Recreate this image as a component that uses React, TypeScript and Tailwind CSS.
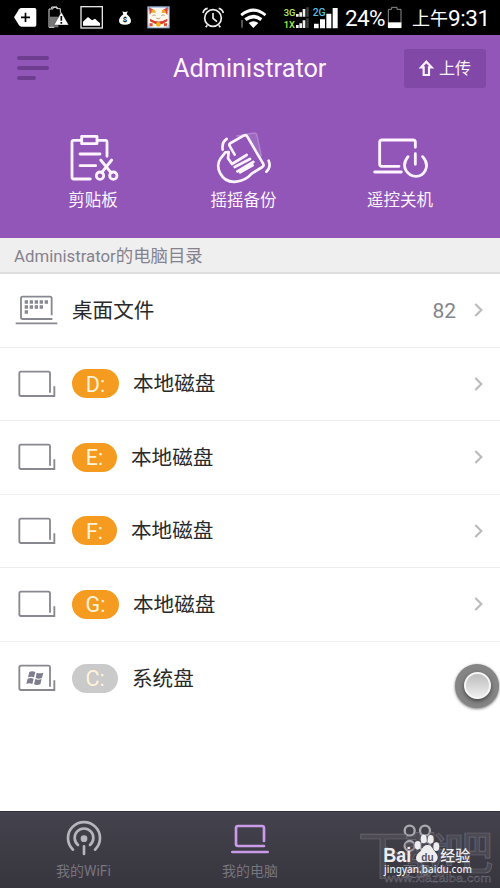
import React from "react";

const FONT = "font-[Roboto,'Noto_Sans_CJK_SC',sans-serif]";

function NotificationIcons() {
  return (
    <svg className="h-[35px] w-[180px] shrink-0" viewBox="0 0 540 105" fill="none">
      <path d="M42 52 57 28q3-4 8-4h39q5 0 5 5v46q0 5-5 5H65q-5 0-8-4z" fill="#fff" />
      <path d="M63 52h27M76.500 38v28" stroke="#000" strokeWidth="5" />
      <path d="M155 26v-5h16v5h10v14M147 82V27h12v-5h12v5" stroke="#ddd" strokeWidth="3" />
      <path d="M149 50h26v32h-26z" fill="#777" />
      <path d="M147 82h16" stroke="#ddd" strokeWidth="3" />
      <path d="M184 36 206 75h-44z" fill="#fff" stroke="#000" strokeWidth="1" />
      <path d="M184 48v14M184 66v5" stroke="#000" strokeWidth="5" />
      <rect x="243" y="20" width="64" height="64" stroke="#e4e4e4" strokeWidth="4" />
      <path d="M249 77V65l15-14 12 10 9-5 15 14v7z" fill="#fff" />
      <path d="M367 34q8 4 16 0l-3 9q12 9 13 19 0 12-18 12t-18-12q1-11 13-19z" fill="#fff" />
      <text x="375" y="67" textAnchor="middle" fill="#000" fontSize="23" fontWeight="700" fontFamily="Roboto,sans-serif">$</text>
      <rect x="442" y="19" width="67" height="66" fill="#9db9db" />
      <path d="M445 35q0-12 10-12h40q11 0 11 12v35q0 12-11 12h-39q-11 0-11-12z" fill="#fff8ed" />
      <path d="m447 22 15 8q-8 6-13 14zM504 21l-16 9q8 6 14 15z" fill="#e24737" />
      <path d="M455 30h9l4 8h-13zM486 30h9l3 9h-13z" fill="#edae32" />
      <path d="M457 47q5-5 10 0M484 47q5-5 10 0M469 54q6 5 12 0" stroke="#a66c55" strokeWidth="2" />
      <path d="M450 56q26 17 52 0v8q-25 18-52 0z" fill="#dc3d2c" />
      <circle cx="475" cy="73" r="7" fill="#edb523" />
      <path d="M448 70h10v9h-9zM492 70h10l-2 9h-8z" fill="#e7482c" />
    </svg>
  );
}

function RadioIcons() {
  return (
    <svg className="h-[35px] w-[143px] shrink-0" viewBox="600 0 429 105" fill="none">
      <circle cx="639" cy="54" r="25" stroke="#eee" strokeWidth="5" />
      <path d="M639 39v16l12 10M622 76l-5 6M656 76l5 6M609 39q2-12 14-14M656 25q12 3 14 14" stroke="#eee" strokeWidth="5" />
      <path d="M721 42Q760 9 799 42l-5 7q-34-27-68 0zM733 55q27-22 54 0l-6 8q-21-15-42 0zM746 69q14-11 29 0l-15 15z" fill="#fff" />
      <path d="M726 60v23" stroke="#aaa" strokeWidth="3" />
      <text x="851" y="49" textLength="35" lengthAdjust="spacingAndGlyphs" fill="#b1ed61" fontSize="29" fontWeight="500" fontFamily="Roboto,sans-serif">3G</text>
      <text x="851" y="83" textLength="34" lengthAdjust="spacingAndGlyphs" fill="#a6ec4a" fontSize="29" fontWeight="500" fontFamily="Roboto,sans-serif">1X</text>
      <path d="M888 42h8v8h-8zM898 37h8v13h-8zM908 27h8v23h-8zM888 75h8v9h-8zM898 70h8v14h-8zM908 61h8v23h-8z" fill="#eee" />
      <path d="M919 22h7v28h-7zM919 55h7v29h-7z" fill="#444" />
      <text x="938" y="49" textLength="39" lengthAdjust="spacingAndGlyphs" fill="#58bfe2" fontSize="35" fontWeight="500" fontFamily="Roboto,sans-serif">2G</text>
      <path d="M942 71h14v14h-14zM960 58h15v27h-15zM979 41h15v44h-15zM998 24h15v61h-15z" fill="#fff" />
    </svg>
  );
}

function StatusBar() {
  return (
    <div className="flex h-[35px] items-center overflow-hidden bg-black text-white">
      <NotificationIcons />
      <div className="w-5" />
      <RadioIcons />
      <span className="ml-[2px] w-[42px] whitespace-nowrap pt-px text-[22.500px] leading-[35px] tracking-[-0.7px]">24%</span>
      <svg className="h-[35px] w-[16px] shrink-0" viewBox="0 0 48 105" fill="none">
        <path d="M4 83V28h10v-6h16v6h12v55z" stroke="#aaa" strokeWidth="2.500" />
        <path d="M3 67h40v17H3z" fill="#fff" />
      </svg>
      <span className="ml-[9px] flex items-center whitespace-nowrap pt-px leading-[35px]">
        <span className="text-[18px]">上午</span>
        <span className="text-[22.500px] tracking-[-0.4px]">9:31</span>
      </span>
    </div>
  );
}

function ClipboardIcon() {
  return (
    <svg className="h-[50px] w-[54px]" viewBox="82 36 162 150" fill="none" stroke="#fff4ff" strokeWidth="8.500" strokeLinecap="round" strokeLinejoin="round">
      <path d="M124 58h-22q-5 0-5 5v106q0 5 5 5h50M174 58h23q5 0 5 5v43" />
      <path d="M126 46h46v22h-46zM121 99h60M121 134h47M183 117l31 38M216 117l-30 38" />
      <circle cx="181" cy="164" r="11" /><circle cx="221" cy="164" r="11" />
    </svg>
  );
}

function ShakeIcon() {
  return (
    <svg className="h-[54px] w-[57px]" viewBox="526 30 171 162" fill="none" stroke="#fff4ff" strokeWidth="8" strokeLinecap="round" strokeLinejoin="round">
      <path d="m588 45 51-9q8-1 10 7l13 61-8 5-35-63z" fill="#fff" fillOpacity=".12" stroke="#d5afe4" strokeOpacity=".45" strokeWidth="4" />
      <path d="m582 101-15-26q-3-6 3-9l39-22q7-4 11 3l47 80q4 7-2 11l-31 19q-20 22-47 25-33 4-49-26-12-25 2-44l14-18 10-1-2 19 12 17 44-27" />
      <path d="m582 138 46-24M590 151l48-28M598 154l38-21M546 86q-3-23 12-32M684 119q8 20-7 33" />
    </svg>
  );
}

function PowerIcon() {
  return (
    <svg className="h-[42px] w-[58px]" viewBox="366 49 174 126" fill="none" stroke="#fff4ff" strokeWidth="8.500" strokeLinecap="round" strokeLinejoin="round">
      <path d="M374 154h80M447 137h-51q-7 0-7-7V65q0-7 7-7h93q7 0 7 7v15M496 99v32M474 108q-18 23-5 43 11 16 29 16 19 0 28-18 10-21-8-41" />
    </svg>
  );
}

const actions = [
  { label: "剪贴板", Icon: ClipboardIcon, box: "w-[186px]", shift: "pl-px" },
  { label: "摇摇备份", Icon: ShakeIcon, box: "w-[115px]", shift: "pl-px" },
  { label: "遥控关机", Icon: PowerIcon, box: "w-[198px]", shift: "pl-px" },
];

function Header() {
  return (
    <header className="flex h-[203px] flex-col bg-[#9156b8] text-[#fff4ff]">
      <div className="flex h-[66px] items-center pl-[17px] pr-[14px]">
        <div className="flex w-8 flex-col gap-[6px]">
          <i className="h-1 w-8 rounded-full bg-[#6e3d90]" />
          <i className="h-1 w-8 rounded-full bg-[#6e3d90]" />
          <i className="h-1 w-[19px] rounded-full bg-[#6e3d90]" />
        </div>
        <h1 className="ml-[124px] w-[231px] whitespace-nowrap pt-px text-[25.300px]">Administrator</h1>
        <button className="flex h-[39px] w-[82px] items-center rounded-[3px] bg-[#8148a8] pl-[15px]">
          <svg className="h-[17px] w-[15px]" viewBox="508 179 45 51" fill="none" stroke="#fff4ff" strokeWidth="6.500">
            <path d="m530 184 16 17h-8v23h-16v-23h-8z" />
          </svg>
          <span className="ml-[5px] pt-[2px] text-[16px]">上传</span>
        </button>
      </div>
      <nav className="flex pt-[29px]">
        {actions.map(({ label, Icon, box, shift }) => (
          <div key={label} className={`flex flex-col items-center ${box}`}>
            <div className={`flex h-[56px] items-center ${shift}`}><Icon /></div>
            <span className="mt-[3px] text-[16.500px] leading-6">{label}</span>
          </div>
        ))}
      </nav>
    </header>
  );
}

function DesktopIcon() {
  return (
    <svg className="h-[31px] w-[43px] shrink-0" viewBox="44 181 129 93" fill="none" stroke="#888891" strokeWidth="5.500">
      <path d="M46 266h125M154 242v-51q0-5-5-5H67q-5 0-5 5v57q0 5 5 5h89" />
      <path d="M73 202h72M73 217h60M73 232h12" strokeWidth="10" strokeDasharray="10 5" />
    </svg>
  );
}

function DiskIcon({ system }: { system?: boolean }) {
  return (
    <svg className="h-[28px] w-[38px] shrink-0" viewBox="55 71 114 84" fill="none" stroke="#888891" strokeWidth="5.500">
      <path d="M151 139V81q0-5-5-5H64q-5 0-5 5v63q0 5 5 5h100v-29" />
      {system && (
        <g transform="translate(0 -3)" fill="#7d7d8d" stroke="none">
          <path d="M89 98q8-5 18 0l-4 16q-9-4-18 0zM111 100q9 4 20 0l-4 16q-10 4-19 0zM84 118q9-4 18 0l-4 16q-9-4-18 0zM107 119q9 4 19 0l-4 16q-10 4-19 0z" />
        </g>
      )}
    </svg>
  );
}

function Chevron() {
  return (
    <svg className="h-[16px] w-[10px]" viewBox="0 0 30 48" fill="none" stroke="#bbb" strokeWidth="6.500">
      <path d="m4 6 18 18L4 42" />
    </svg>
  );
}

const disks = [
  { letter: "D:", name: "本地磁盘", pill: "w-[47px] bg-[#f59b20]" },
  { letter: "E:", name: "本地磁盘", pill: "w-[45px] bg-[#f59b20]" },
  { letter: "F:", name: "本地磁盘", pill: "w-[45px] bg-[#f59b20]" },
  { letter: "G:", name: "本地磁盘", pill: "w-[47px] bg-[#f59b20]" },
  { letter: "C:", name: "系统盘", pill: "w-[46px] bg-[#cacaca]" },
];

function FileList() {
  return (
    <main className="h-[537px] bg-white text-[20.600px] text-[#292929]">
      <div className="flex h-[73.500px] items-center border-b border-[#eee] pl-[15px] pr-[16px]">
        <DesktopIcon />
        <span className="ml-[14px] pt-[2px]">桌面文件</span>
        <span className="ml-auto mr-[18px] pt-[2px] text-[21px] text-[#85858d]">82</span>
        <Chevron />
      </div>
      {disks.map((d) => (
        <div key={d.letter} className={`flex h-[73.500px] items-center pl-[18px] pr-[16px] ${d.letter === "C:" ? "" : "border-b border-[#eee]"}`}>
          <DiskIcon system={d.letter === "C:"} />
          <span className={`ml-4 flex h-[29px] items-center justify-center rounded-full pt-[2px] text-[21.500px] text-[#fff3d8] ${d.pill}`}>{d.letter}</span>
          <span className="ml-[14px] pt-[2px]">{d.name}</span>
          {d.letter !== "C:" && <span className="ml-auto"><Chevron /></span>}
        </div>
      ))}
    </main>
  );
}

function BottomBar() {
  return (
    <footer className="relative flex h-[77px] border-t border-[#33313a] bg-linear-to-b from-[#44424c] to-[#37353e] text-[14px] text-[#77757e]">
      <div className="flex w-[167px] flex-col items-center pt-[8px]">
        <svg className="h-[36px] w-[38px]" viewBox="194 60 114 108" fill="none" stroke="#b7b6be" strokeWidth="8" strokeLinecap="round">
          <circle cx="251" cy="116" r="10" fill="#b7b6be" stroke="none" />
          <path d="M251 139v23M233 135a28 28 0 1 1 36 0M218 149a48 48 0 1 1 66 0" />
        </svg>
        <span className="mt-[5px] leading-5">我的WiFi</span>
      </div>
      <div className="flex w-[166px] flex-col items-center pt-[11px]">
        <svg className="h-[32px] w-[40px]" viewBox="690 67 120 96" fill="none" stroke="#c99be8" strokeWidth="8" strokeLinecap="round">
          <path d="M697 154h106M792 121V82q0-6-6-6h-72q-6 0-6 6v48q0 6 6 6h78" />
        </svg>
        <span className="mt-[6px] leading-5">我的电脑</span>
      </div>
      <div className="flex w-[167px] flex-col items-center pt-[12px]">
        <svg className="h-[30px] w-[30px]" viewBox="0 0 90 90" fill="none" stroke="#aaa9b0" strokeWidth="7">
          <circle cx="23" cy="20" r="15" /><circle cx="69" cy="20" r="15" />
          <circle cx="23" cy="66" r="15" /><circle cx="69" cy="66" r="15" />
        </svg>
        <span className="mt-[7px] leading-5">更多</span>
      </div>
      <svg className="absolute left-[340px] top-[-12px] h-[88px] w-[160px] overflow-visible" viewBox="0 0 480 264">
        <g fill="#5d5b64" fillOpacity=".45" stroke="#7d7b84" strokeOpacity=".75" strokeWidth="2" fontSize="154" fontWeight="500" fontFamily="Noto Sans CJK SC,sans-serif">
          <text x="54" y="222" textLength="154" lengthAdjust="spacingAndGlyphs">下</text>
          <text x="190" y="216" fontSize="140" textLength="132" lengthAdjust="spacingAndGlyphs">载</text>
          <text x="310" y="208" fontSize="138" textLength="150" lengthAdjust="spacingAndGlyphs">吧</text>
        </g>
        <text x="133" y="246" textLength="321" lengthAdjust="spacingAndGlyphs" fill="#42404a" stroke="#77757d" strokeWidth="1" fontSize="33" fontFamily="Liberation Sans,sans-serif">www.xiazaiba.com</text>
        <g fill="#eeeef1">
          <text x="130" y="185" textLength="84" lengthAdjust="spacingAndGlyphs" fontSize="60" fontWeight="700" fontFamily="Liberation Sans,sans-serif">Bai</text>
          <ellipse cx="233" cy="136" rx="9" ry="13" /><ellipse cx="251" cy="117" rx="9" ry="13" /><ellipse cx="272" cy="118" rx="9" ry="13" /><ellipse cx="289" cy="140" rx="9" ry="13" />
          <path d="M262 135q12 0 19 16 13 13 12 23-3 16-18 13-14-3-28 0-19 2-19-14 1-10 15-21 7-17 19-17" />
          <text x="301" y="182" textLength="90" lengthAdjust="spacingAndGlyphs" fontSize="45" fontWeight="500" fontFamily="Noto Sans CJK SC,sans-serif">经验</text>
          <text x="132" y="220" textLength="264" lengthAdjust="spacingAndGlyphs" fontSize="31" fontWeight="500" fontFamily="Noto Sans,sans-serif">jingyan.baidu.com</text>
        </g>
        <text x="244" y="182" textLength="37" lengthAdjust="spacingAndGlyphs" fill="#55535e" fontSize="34" fontWeight="700" fontFamily="Liberation Sans,sans-serif">du</text>
      </svg>
    </footer>
  );
}

export default function App() {
  return (
    <div className={`relative h-[888px] w-[500px] overflow-hidden bg-white ${FONT}`}>
      <StatusBar />
      <Header />
      <div className="flex h-[36px] items-center border-b-2 border-[#dedede] bg-[#efefef] pl-[14px] pt-[3px] text-[16.800px] text-[#85828e]"><span>Administrator</span><span className="text-[17.400px]">的电脑目录</span></div>
      <FileList />
      <BottomBar />
      <div className="absolute left-[455px] top-[664px] flex size-11 items-center justify-center rounded-full bg-[#858585] shadow-[0_1px_3px_#777]">
        <div className="mb-[2px] size-[27px] rounded-full border-2 border-[#f5f5f5] bg-linear-to-b from-[#bdbdbd] to-[#eeeeee] shadow-[0_2px_4px_#444]" />
      </div>
    </div>
  );
}
